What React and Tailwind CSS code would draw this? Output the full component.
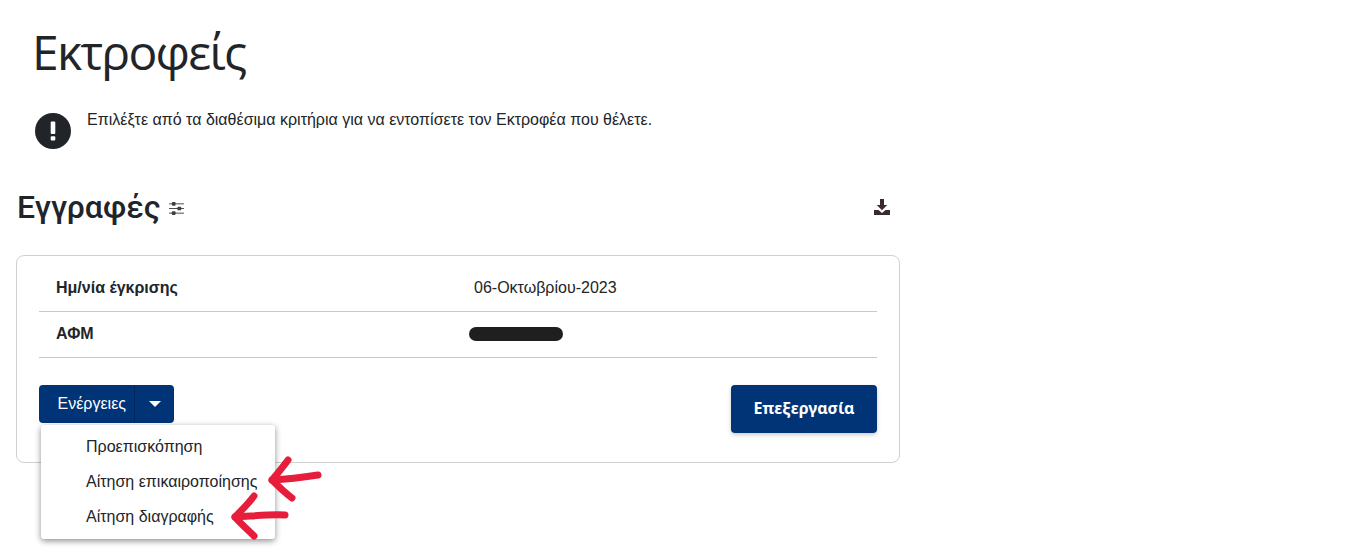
import React from "react";

const sans = "font-['Liberation_Sans',Arial,sans-serif]";

function Arrow({ className, d1, d2 }) {
  return (
    <svg className={className} viewBox="0 0 60 50" fill="none" stroke="#e61e3c" strokeWidth="7" strokeLinecap="round" strokeLinejoin="round">
      <path d={d1} />
      <path d={d2} />
    </svg>
  );
}

export default function App() {
  return (
    <div className={`w-[1355px] h-[556px] overflow-hidden bg-white text-[#212529] ${sans}`}>
      <div className="w-[900px] ml-[16px] pt-[16px]">
        <h1 className="ml-[16px] text-[48px] leading-[72px] tracking-[-1.75px] font-['Open_Sans',sans-serif] font-normal text-[#212529]">Εκτροφείς</h1>

        <div className="ml-[19px] mt-[20px] flex items-start gap-[16px] h-[56px]">
          <svg width="36" height="38" viewBox="0 0 36 38" className="shrink-0 mt-[4px]">
            <circle cx="18" cy="19" r="18" fill="#212529" />
            <rect x="15.7" y="9.5" width="4.6" height="12.5" rx="1" fill="#fff" />
            <rect x="15.7" y="24.2" width="4.6" height="4.4" rx="1" fill="#fff" />
          </svg>
          <p className="text-[16px] leading-[24px]">Επιλέξτε από τα διαθέσιμα κριτήρια για να εντοπίσετε τον Εκτροφέα που θέλετε.</p>
        </div>

        <div className="mt-[25px] flex items-center justify-between pl-[1px] pr-[26px] h-[36px]">
          <div className="flex items-center gap-[8px]">
            <h2 className="text-[32px] leading-[36px] font-['Roboto',sans-serif] font-medium text-[#212529]">Εγγραφές</h2>
            <svg width="15" height="13" viewBox="0 0 16 14" className="mt-[3px]" fill="#3a3f45">
              <rect x="0" y="1.5" width="16" height="1" />
              <rect x="3" y="0" width="4" height="4" rx="1" />
              <rect x="0" y="6.5" width="16" height="1" />
              <rect x="9" y="5" width="4" height="4" rx="1" />
              <rect x="0" y="11.5" width="16" height="1" />
              <rect x="3" y="10" width="4" height="4" rx="1" />
            </svg>
          </div>
          <svg width="16" height="16" viewBox="0 0 16 16" fill="#3a2a30">
            <path d="M6 0h4v6h3.2L8 11.2 2.8 6H6z" />
            <path d="M0 11h4.5L8 14l3.5-3H16v5H0z" />
          </svg>
        </div>

        <div className="relative mt-[30px] w-[884px] h-[208px] rounded-[8px] border border-[#d0d0d0] px-[22px]">
          <div className="flex items-center h-[56px] border-b border-[#c8c8c8] pl-[17px] pt-[9px]">
            <span className="w-[418px] text-[16px] font-bold text-[#212529]">Ημ/νία έγκρισης</span>
            <span className="text-[16px] text-[#212529]">06-Οκτωβρίου-2023</span>
          </div>
          <div className="flex items-center h-[46px] border-b border-[#c8c8c8] pl-[17px] pb-[2px]">
            <span className="w-[413px] text-[16px] font-bold">ΑΦΜ</span>
            <span className="block w-[94px] h-[14px] rounded-full bg-[#1f1f1f]" />
          </div>
          <div className="flex items-start justify-between pt-[27px]">
            <div className="flex h-[38px] w-[135px] rounded-[4px] bg-[#003476] text-white">
              <span className="w-[96px] flex items-center justify-end pr-[8px] border-r border-[#00285c] text-[16px] my-[1px]">Ενέργειες</span>
              <span className="flex-1 flex items-center justify-center">
                <span className="block w-0 h-0 border-l-[6px] border-r-[6px] border-t-[6px] border-l-transparent border-r-transparent border-t-white" />
              </span>
            </div>
            <button className="h-[48px] w-[146px] rounded-[4px] bg-[#003476] pb-[2px] text-white text-[16px] font-bold font-['Noto_Sans',sans-serif] shadow-[0_2px_4px_rgba(0,0,0,0.2)]">Επεξεργασία</button>
          </div>

          <div className="absolute left-[24px] top-[169px] w-[234px] h-[114px] rounded-[3px] bg-white shadow-[0_2px_6px_rgba(0,0,0,0.45)] pt-[4px] pl-[45px] text-[16px] text-[#212529]">
            <div className="h-[35px] leading-[35px]">Προεπισκόπηση</div>
            <div className="h-[35px] leading-[35px]">Αίτηση επικαιροποίησης</div>
            <div className="h-[35px] leading-[35px]">Αίτηση διαγραφής</div>
          </div>
          <Arrow
            d1="M51 20 C38 22 24 24 5 25"
            d2="M21 5 C16 12 10 19 5 25 C11 31 17 37 25 43"
            className="absolute left-[250px] top-[199px] w-[60px] h-[50px]"
          />
          <Arrow
            d1="M55 23 C42 22 24 24 5 25"
            d2="M24 4 C18 12 11 19 5 25 C11 32 17 37 24 44"
            className="absolute left-[213px] top-[236px] w-[60px] h-[50px]"
          />
        </div>
      </div>
    </div>
  );
}
